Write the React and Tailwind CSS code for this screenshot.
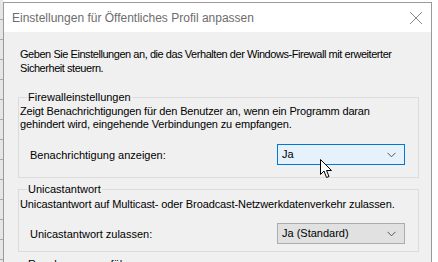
import React from "react";

function Chevron() {
  return (
    <svg width="9" height="6" viewBox="0 0 9 6" className="block">
      <path d="M0.5 0.8 L4.5 4.8 L8.5 0.8" fill="none" stroke="#555" strokeWidth="1" />
    </svg>
  );
}

function Select({ value, active }) {
  return (
    <div
      className={
        "flex items-center justify-between w-[128px] h-[21px] pl-[4px] pr-[8px] border " +
        (active ? "border-[#0078d7] bg-[#e5f1fb]" : "border-[#adadad] bg-[#e1e1e1]")
      }
    >
      <span className="text-[11px] text-black leading-none">{value}</span>
      <Chevron />
    </div>
  );
}

function Cursor() {
  return (
    <svg width="13" height="20" viewBox="0 0 13 20" className="absolute left-[320px] top-[159px]">
      <path
        d="M0.5 0.5 L0.5 15.5 L4 12 L6.5 18.5 L9 17.5 L6.5 11.5 L11.5 11.5 Z"
        fill="#fff"
        stroke="#000"
        strokeWidth="1"
        strokeLinejoin="miter"
      />
    </svg>
  );
}

export default function App() {
  return (
    <div
      className="relative w-[438px] h-[262px] overflow-hidden bg-white"
      style={{ fontFamily: '"Liberation Sans", Arial, sans-serif' }}
    >
      <div className="absolute left-0 top-0 w-[3px] h-[262px] bg-[repeating-linear-gradient(180deg,#e6e6e6_0px,#e6e6e6_19px,#a8a8a8_19px,#a8a8a8_20px)]" />
      <div className="absolute left-[3px] top-[2px] w-[429px] h-[280px] border border-[#9a9a9a] bg-[#f0f0f0] flex flex-col">
        <div className="h-[29px] bg-white flex items-center justify-between pl-[8px] pr-[7px] shrink-0">
          <span className="text-[12px] text-[#6d6d6d] mt-[1px] whitespace-nowrap">
            Einstellungen für Öffentliches Profil anpassen
          </span>
          <svg width="14" height="14" viewBox="0 0 14 14" className="mr-[1px]">
            <path d="M1 1 L13 13 M13 1 L1 13" stroke="#8a8a8a" strokeWidth="1" />
          </svg>
        </div>
        <div className="pl-[16px] pr-[12px] pt-[15px] text-[11px] text-black leading-[14px]">
          <p className="whitespace-nowrap tracking-[-0.45px]">
            Geben Sie Einstellungen an, die das Verhalten der Windows-Firewall mit erweiterter
            <br />
            Sicherheit steuern.
          </p>
          <fieldset className="mt-[16px] ml-[-2px] border border-[#dcdcdc] px-[10px] pb-[12px]">
            <legend className="ml-[-2px] px-[1px] leading-[13px]">Firewalleinstellungen</legend>
            <p className="ml-[-9px] leading-[13px] mt-[1px] whitespace-nowrap tracking-[-0.15px]">
              Zeigt Benachrichtigungen für den Benutzer an, wenn ein Programm daran
              <br />
              gehindert wird, eingehende Verbindungen zu empfangen.
            </p>
            <div className="flex items-center justify-between mt-[13px] mr-[3px] ml-[1px]">
              <span>Benachrichtigung anzeigen:</span>
              <Select value="Ja" active />
            </div>
          </fieldset>
          <fieldset className="mt-[5px] ml-[-2px] border border-[#dcdcdc] px-[10px] pb-[7px]">
            <legend className="ml-[-2px] px-[1px] leading-[13px]">Unicastantwort</legend>
            <p className="ml-[-9px] leading-[13px] mt-[2px] whitespace-nowrap tracking-[-0.1px]">
              Unicastantwort auf Multicast- oder Broadcast-Netzwerkdatenverkehr zulassen.
            </p>
            <div className="flex items-center justify-between mt-[12px] mr-[3px] ml-[1px]">
              <span>Unicastantwort zulassen:</span>
              <Select value="Ja (Standard)" />
            </div>
          </fieldset>
          <fieldset className="mt-[6px] ml-[-2px] border border-[#dcdcdc] h-[40px] px-[10px]">
            <legend className="ml-[-2px] px-[1px] leading-[13px]">Regelzusammenführung</legend>
          </fieldset>
        </div>
      </div>
      <Cursor />
    </div>
  );
}
